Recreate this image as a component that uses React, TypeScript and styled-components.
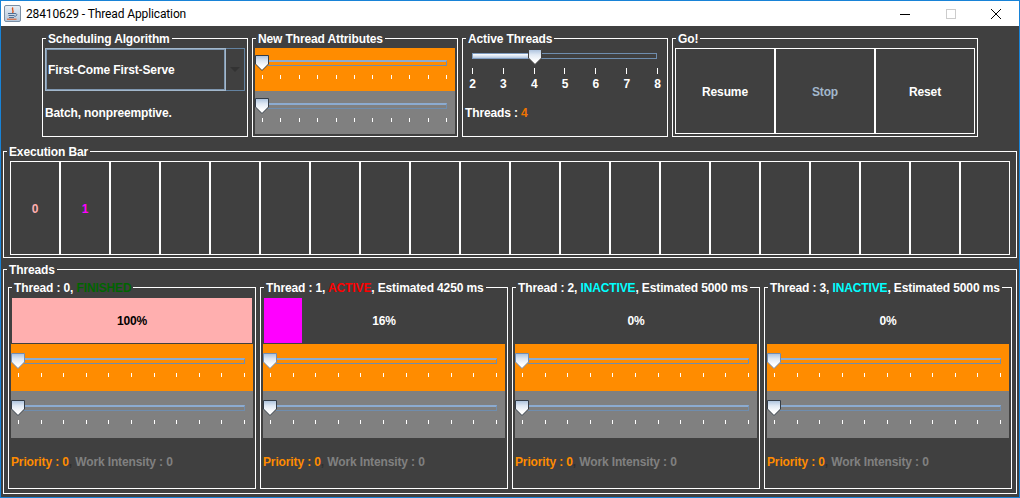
import { createGlobalStyle } from 'styled-components';
import styled from 'styled-components';

const GlobalStyle = createGlobalStyle`
  html, body {
    margin: 0;
    padding: 0;
    background: #404040;
  }
`;

const Window = styled.div`
  box-sizing: border-box;
  width: 1020px;
  height: 498px;
  border: 1px solid #1883d7;
  background: #404040;
  font-family: "Liberation Sans", Arial, sans-serif;
  font-size: 12px;
  font-weight: 700;
  line-height: 14px;
  letter-spacing: -0.13px;
  color: #ffffff;
  overflow: hidden;
`;

const TitleBar = styled.div`
  height: 25px;
  background: #ffffff;
  display: flex;
  align-items: center;
  padding-left: 3px;
`;

const TitleText = styled.span`
  margin-left: 5px;
  font-family: Roboto, "Noto Sans", sans-serif;
  font-size: 12px;
  font-weight: 400;
  letter-spacing: -0.12px;
  color: #000000;
`;

const WindowButtons = styled.div`
  margin-left: auto;
  display: flex;
  height: 100%;
`;

const WindowButton = styled.div`
  width: 45.5px;
  display: flex;
  align-items: center;
  justify-content: center;
  padding-top: 1px;
`;

const Content = styled.div`
  display: flex;
  flex-direction: column;
  padding: 5px 2px 0;
`;

const TopRow = styled.div`
  display: flex;
  gap: 4px;
  margin-left: 39px;
  height: 106px;
`;

const Group = styled.fieldset<{ $width?: number }>`
  box-sizing: border-box;
  margin: 0;
  padding: 0;
  min-width: 0;
  border: 1px solid #ffffff;
  width: ${({ $width }) => ($width ? `${$width}px` : 'auto')};
  display: block;
`;

const Legend = styled.legend`
  box-sizing: border-box;
  height: 14px;
  margin-left: 3px;
  padding: 1px 2px 0;
  line-height: 14px;
  white-space: nowrap;
`;

const Tight = styled.div`
  padding: 3px 2px 2px;
`;

const ComboRow = styled.div`
  display: flex;
  height: 43px;
`;

const ComboField = styled.div`
  box-sizing: border-box;
  width: 181px;
  border: 1px solid #a3b8cc;
  outline: 1px solid #7f97b0;
  outline-offset: -2px;
  display: flex;
  align-items: center;
  padding-left: 2px;
`;

const ComboButton = styled.div`
  box-sizing: border-box;
  width: 19px;
  border: 1px solid #6382a0;
  border-left-width: 0;
  display: flex;
  align-items: center;
  justify-content: center;
`;

const ComboArrow = styled.div`
  width: 0;
  height: 0;
  border-left: 5px solid transparent;
  border-right: 5px solid transparent;
  border-top: 5px solid #333333;
`;

const PanelNote = styled.div`
  height: 43px;
  display: flex;
  align-items: center;
`;

const SliderStrip = styled.div<{ $color: string; $height: number }>`
  box-sizing: border-box;
  height: ${({ $height }) => $height}px;
  background: ${({ $color }) => $color};
  padding: ${({ $height }) => ($height - 43) / 2 + 7}px 8px 0 0;
  display: flex;
  flex-direction: column;
`;

const SliderBody = styled.div`
  position: relative;
  height: 16px;
`;

const Track = styled.div<{ $left: number }>`
  position: absolute;
  left: ${({ $left }) => $left}px;
  right: 0;
  top: 5px;
  height: 6px;
  box-sizing: border-box;
  border: 1px solid #6f8dae;
  border-top: 2px solid #8cabd0;
  border-left: none;
`;

const ThumbSlot = styled.svg<{ $left: number }>`
  position: absolute;
  left: ${({ $left }) => $left}px;
  top: 0;
  display: block;
`;

const Ticks = styled.div<{ $left: number; $top: number }>`
  display: flex;
  justify-content: space-between;
  margin: ${({ $top }) => $top}px 0 0 ${({ $left }) => $left}px;
`;

const Tick = styled.div<{ $height: number }>`
  width: 1px;
  height: ${({ $height }) => $height}px;
  background: #ffffff;
`;

const Thumb = ({ left, edge = '#333c47' }: { left: number; edge?: string }) => (
  <ThumbSlot $left={left} width="14" height="16" viewBox="0 0 14 16">
    <defs>
      <linearGradient id="thumbFill" x1="0" y1="0" x2="0" y2="1">
        <stop offset="0" stopColor="#a9c0dc" />
        <stop offset="0.35" stopColor="#dfe8f3" />
        <stop offset="0.75" stopColor="#ffffff" />
      </linearGradient>
    </defs>
    <path d="M0.5 0.5 H13.5 V9 L7 15.5 L0.5 9 Z" fill="url(#thumbFill)" stroke={edge} strokeWidth="1" />
  </ThumbSlot>
);

const PlainSlider = ({ color, height, edge }: { color: string; height: number; edge?: string }) => (
  <SliderStrip $color={color} $height={height}>
    <SliderBody>
      <Track $left={13} />
      <Thumb left={0} edge={edge} />
    </SliderBody>
    <Ticks $left={7} $top={4}>
      {Array.from({ length: 11 }).map((_, i) => (
        <Tick key={i} $height={4} />
      ))}
    </Ticks>
  </SliderStrip>
);

const ThreadsSlider = styled.div`
  padding: 1px 7px 0 7px;
`;

const ActiveBody = styled.div`
  position: relative;
  height: 16px;
  margin-bottom: 3px;
`;

const ActiveTrack = styled.div`
  position: absolute;
  left: 0;
  right: 1px;
  top: 4px;
  height: 6px;
  box-sizing: border-box;
  border: 1px solid #6f8dae;
`;

const ActiveFill = styled.div`
  position: absolute;
  left: 0;
  top: 4px;
  height: 6px;
  box-sizing: border-box;
  border: 1px solid #7f9cc0;
  background: linear-gradient(#ffffff, #b4c8e2);
`;

const ScaleTicks = styled.div`
  display: flex;
  justify-content: space-between;
`;

const ScaleLabels = styled.div`
  display: flex;
  justify-content: space-between;
  margin-top: 3px;
`;

const ScaleLabel = styled.span`
  width: 1px;
  display: flex;
  justify-content: center;
`;

const ActiveNote = styled.div`
  margin-top: 15px;
`;

const ButtonRow = styled.div`
  display: grid;
  grid-template-columns: 100px 100px 100px;
  height: 86px;
  margin: 3px 0 0 2px;
`;

const GoButton = styled.div<{ $disabled?: boolean }>`
  border: 1px solid #ffffff;
  display: flex;
  align-items: center;
  justify-content: center;
  padding-top: 1px;
  color: ${({ $disabled }) => ($disabled ? '#a3b8cc' : '#ffffff')};
`;

const CellRow = styled.div`
  display: grid;
  grid-template-columns: repeat(20, 50px);
  height: 94px;
  margin: 3px 0 2px 6px;
`;

const Cell = styled.div<{ $color?: string }>`
  border: 1px solid #ffffff;
  display: flex;
  align-items: center;
  justify-content: center;
  padding-top: 1px;
  color: ${({ $color }) => $color ?? '#ffffff'};
`;

const ThreadGrid = styled.div`
  display: grid;
  grid-template-columns: repeat(4, 248px);
  gap: 4px;
  padding: 4px;
`;

const ThreadBody = styled.div`
  padding: 4px 2px 0;
  height: 194px;
  box-sizing: border-box;
`;

const Progress = styled.div`
  position: relative;
  width: 240px;
  height: 45px;
  margin: 0 1px 1px;
`;

const ProgressFill = styled.div<{ $color: string }>`
  height: 100%;
  background: ${({ $color }) => $color};
`;

const ProgressLabel = styled.div<{ $dark?: boolean }>`
  position: absolute;
  inset: 0;
  padding-top: 1px;
  display: flex;
  align-items: center;
  justify-content: center;
  color: ${({ $dark }) => ($dark ? '#000000' : '#ffffff')};
`;

const ThreadNote = styled.div`
  margin-top: 17px;
`;

const Colored = styled.span<{ $color: string }>`
  color: ${({ $color }) => $color};
`;

const threads = [
  { id: 0, status: 'FINISHED', statusColor: '#006400', estimate: '', percent: 100, fill: '#ffafaf', dark: true },
  { id: 1, status: 'ACTIVE', statusColor: '#ff0000', estimate: 'Estimated 4250 ms', percent: 16, fill: '#ff00ff', dark: false },
  { id: 2, status: 'INACTIVE', statusColor: '#00ffff', estimate: 'Estimated 5000 ms', percent: 0, fill: '#ff00ff', dark: false },
  { id: 3, status: 'INACTIVE', statusColor: '#00ffff', estimate: 'Estimated 5000 ms', percent: 0, fill: '#ff00ff', dark: false },
];

const scale = [2, 3, 4, 5, 6, 7, 8];

const JavaIcon = () => (
  <svg width="17" height="17" viewBox="0 0 17 17">
    <defs>
      <linearGradient id="iconBg" x1="0" y1="0" x2="0" y2="1">
        <stop offset="0" stopColor="#e8eef5" />
        <stop offset="1" stopColor="#b4c6da" />
      </linearGradient>
    </defs>
    <rect x="0.5" y="0.5" width="16" height="16" rx="1.5" fill="url(#iconBg)" stroke="#7a8fa6" />
    <path d="M9 2.5 C7 4.5 10.5 5.5 8.5 8" fill="none" stroke="#d9541e" strokeWidth="1.4" />
    <path d="M4 8.5 H11 M4.5 10.5 H10.5 M5 12.5 H10" stroke="#4f6f96" strokeWidth="1.1" />
    <path d="M11 8.5 C13.5 8.5 13.5 11 10.5 11.5" fill="none" stroke="#4f6f96" strokeWidth="1" />
    <path d="M3 14.2 H12.5" stroke="#d9541e" strokeWidth="1" />
  </svg>
);

export default function App() {
  return (
    <>
      <GlobalStyle />
      <Window>
        <TitleBar>
          <JavaIcon />
          <TitleText>28410629 - Thread Application</TitleText>
          <WindowButtons>
            <WindowButton>
              <svg width="10" height="10" viewBox="0 0 10 10">
                <path d="M0 5.5 H10" stroke="#000000" strokeWidth="1" />
              </svg>
            </WindowButton>
            <WindowButton>
              <svg width="10" height="10" viewBox="0 0 10 10">
                <rect x="0.5" y="0.5" width="9" height="9" fill="none" stroke="#cccccc" />
              </svg>
            </WindowButton>
            <WindowButton>
              <svg width="10" height="10" viewBox="0 0 10 10">
                <path d="M0 0 L10 10 M10 0 L0 10" stroke="#000000" strokeWidth="1" />
              </svg>
            </WindowButton>
          </WindowButtons>
        </TitleBar>
        <Content>
          <TopRow>
            <Group $width={206}>
              <Legend>Scheduling Algorithm</Legend>
              <Tight>
                <ComboRow>
                  <ComboField>First-Come First-Serve</ComboField>
                  <ComboButton>
                    <ComboArrow />
                  </ComboButton>
                </ComboRow>
                <PanelNote>Batch, nonpreemptive.</PanelNote>
              </Tight>
            </Group>
            <Group $width={206}>
              <Legend>New Thread Attributes</Legend>
              <Tight>
                <PlainSlider color="#ff8c00" height={43} />
                <PlainSlider color="#808080" height={43} />
              </Tight>
            </Group>
            <Group $width={206}>
              <Legend>Active Threads</Legend>
              <Tight>
                <ThreadsSlider>
                  <ActiveBody>
                    <ActiveTrack />
                    <ActiveFill style={{ width: `${(57 / 186) * 100}%` }} />
                    <Thumb left={56} edge="#404040" />
                  </ActiveBody>
                  <ScaleTicks>
                    {scale.map(n => (
                      <Tick key={n} $height={6} />
                    ))}
                  </ScaleTicks>
                  <ScaleLabels>
                    {scale.map(n => (
                      <ScaleLabel key={n}>{n}</ScaleLabel>
                    ))}
                  </ScaleLabels>
                </ThreadsSlider>
                <ActiveNote>
                  Threads : <Colored $color="#f07400">4</Colored>
                </ActiveNote>
              </Tight>
            </Group>
            <Group $width={306}>
              <Legend>Go!</Legend>
              <ButtonRow>
                <GoButton>Resume</GoButton>
                <GoButton $disabled>Stop</GoButton>
                <GoButton>Reset</GoButton>
              </ButtonRow>
            </Group>
          </TopRow>

          <Group style={{ marginTop: 7 }}>
            <Legend>Execution Bar</Legend>
            <CellRow>
              {Array.from({ length: 20 }).map((_, i) => (
                <Cell key={i} $color={i === 0 ? '#ffafaf' : i === 1 ? '#ff00ff' : undefined}>
                  {i < 2 ? i : ''}
                </Cell>
              ))}
            </CellRow>
          </Group>

          <Group style={{ marginTop: 4 }}>
            <Legend>Threads</Legend>
            <ThreadGrid>
              {threads.map(t => (
                <Group key={t.id}>
                  <Legend>
                    Thread : {t.id}, <Colored $color={t.statusColor}>{t.status}</Colored>
                    {t.estimate ? `, ${t.estimate}` : ''}
                  </Legend>
                  <ThreadBody>
                    <Progress>
                      <ProgressFill $color={t.fill} style={{ width: `${t.percent}%` }} />
                      <ProgressLabel $dark={t.dark}>{t.percent}%</ProgressLabel>
                    </Progress>
                    <PlainSlider color="#ff8c00" height={47} edge="#6f8db5" />
                    <PlainSlider color="#808080" height={47} />
                    <ThreadNote>
                      <Colored $color="#ff8c00">Priority : 0</Colored>
                      <Colored $color="#2f2f2f">, </Colored>
                      <Colored $color="#808080">Work Intensity : 0</Colored>
                    </ThreadNote>
                  </ThreadBody>
                </Group>
              ))}
            </ThreadGrid>
          </Group>
        </Content>
      </Window>
    </>
  );
}
